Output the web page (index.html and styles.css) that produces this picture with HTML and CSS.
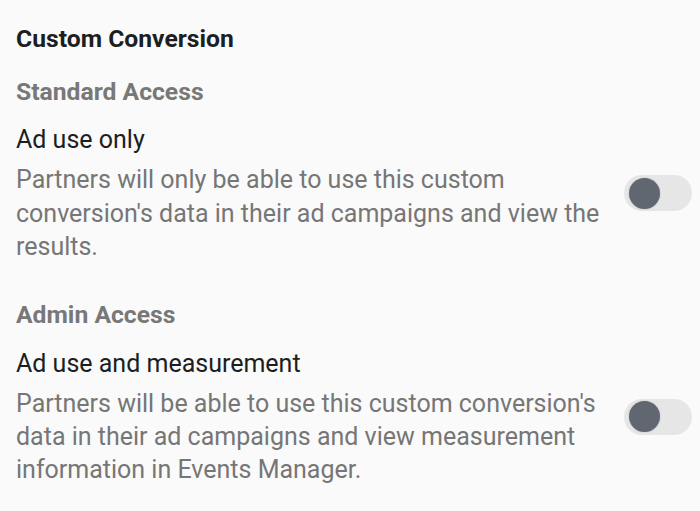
FILE: index.html
```html
<!DOCTYPE html>
<html>
<head>
<meta charset="utf-8">
<link rel="stylesheet" href="styles.css">
</head>
<body>
<div class="page">
  <h1 class="title">Custom Conversion</h1>
  <section class="section">
    <h2 class="section-head">Standard Access</h2>
    <div class="row">
      <div class="row-text">
        <div class="label">Ad use only</div>
        <p class="desc">Partners will only be able to use this custom conversion's data in their ad campaigns and view the results.</p>
      </div>
      <div class="toggle"><span class="knob"></span></div>
    </div>
  </section>
  <section class="section">
    <h2 class="section-head">Admin Access</h2>
    <div class="row">
      <div class="row-text">
        <div class="label">Ad use and measurement</div>
        <p class="desc">Partners will be able to use this custom conversion's data in their ad campaigns and view measurement information in Events Manager.</p>
      </div>
      <div class="toggle"><span class="knob"></span></div>
    </div>
  </section>
</div>
</body>
</html>
```

FILE: styles.css
```css
html, body {
  margin: 0;
  padding: 0;
  background: #fafafa;
}
body {
  font-family: Roboto, "Liberation Sans", sans-serif;
  font-size: 25px;
  line-height: 33.3px;
}
.page {
  padding: 21.5px 8px 0 16px;
}
.title {
  margin: 0 0 20px;
  font-size: 24.7px;
  font-weight: 700;
  line-height: 33.3px;
  color: #1c1e21;
}
.section {
  margin-bottom: 35px;
}
.section-head {
  margin: 0 0 15px;
  font-size: 24.7px;
  font-weight: 700;
  line-height: 33.3px;
  color: #787878;
}
.row {
  display: flex;
  align-items: center;
  gap: 18px;
}
.row-text {
  flex: 1;
}
.label {
  color: #1c1e21;
  margin-bottom: 7px;
}
.desc {
  margin: 0;
  color: #767676;
}
.toggle {
  flex: none;
  width: 68px;
  height: 36px;
  border-radius: 18px;
  background: #e6e6e6;
  display: flex;
  align-items: center;
  padding-left: 5px;
  box-sizing: border-box;
}
.knob {
  width: 31px;
  height: 31px;
  border-radius: 50%;
  background: #606770;
  box-shadow: 0 0 2px rgba(0,0,0,0.2);
}
```
